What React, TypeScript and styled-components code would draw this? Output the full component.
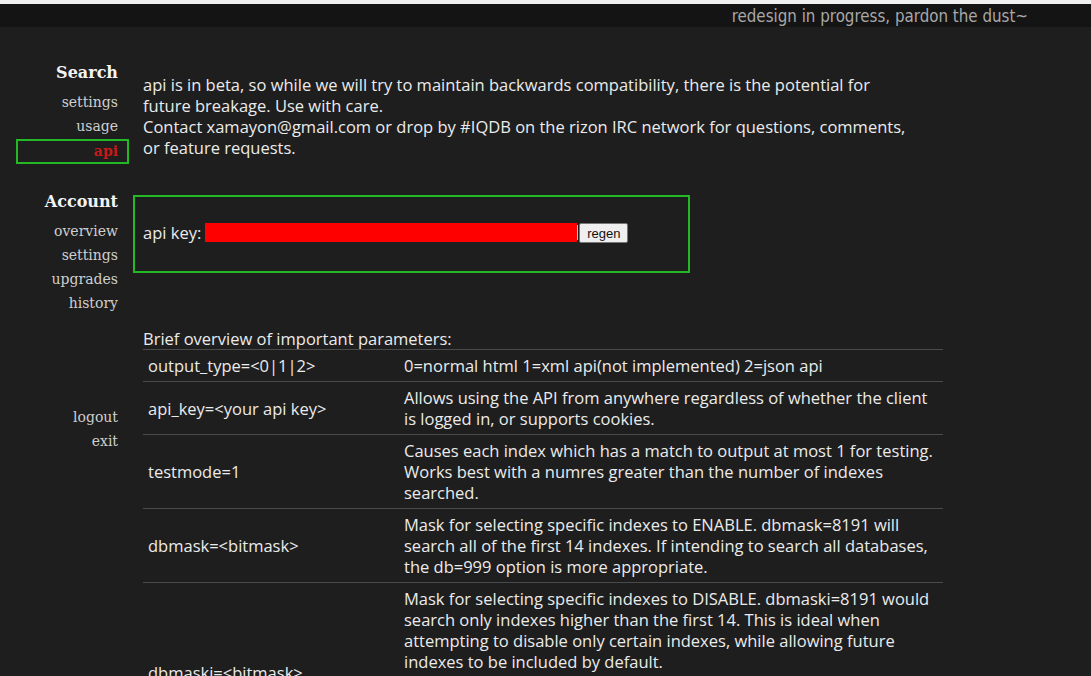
import React from "react";
import styled, { createGlobalStyle } from "styled-components";

const Global = createGlobalStyle`
  html, body { margin: 0; padding: 0; background: #1e1e1e; }
  body { border-top: 4px solid #f0f0f0; font-family: "Open Sans", "Noto Sans", sans-serif; color: #ebebeb; }
`;

const TopBar = styled.div`
  height: 23px;
  background: #141414;
  display: flex;
  justify-content: flex-end;
  align-items: center;
  padding-right: 63px;
  font-family: "DejaVu Sans Condensed", "DejaVu Sans", sans-serif;
  font-stretch: condensed;
  font-size: 16.8px;
  color: #a8a8a8;
`;

const Layout = styled.div`
  display: flex;
  align-items: flex-start;
`;

const Sidebar = styled.nav`
  width: 118px;
  padding: 34px 15px 0 0;
  flex: none;
  text-align: right;
  font-family: "DejaVu Serif", "Liberation Serif", serif;
`;

const Heading = styled.div<{ $top?: number }>`
  font-size: 16px;
  font-weight: bold;
  line-height: 24px;
  color: #f4f4f4;
  margin-top: ${(p) => p.$top ?? 0}px;
  margin-bottom: 5px;
`;

const NavItem = styled.a<{ $active?: boolean; $top?: number }>`
  display: block;
  font-size: 14px;
  line-height: 24px;
  color: #cfcfcf;
  text-decoration: none;
  margin-top: ${(p) => p.$top ?? 0}px;
  ${(p) =>
    p.$active &&
    `
    color: #c41a1a;
    font-weight: bold;
    border: 2px solid #24b824;
    line-height: 21px;
    margin: 1px -11px 0 16px;
    padding-right: 9px;
  `}
`;

const Main = styled.main`
  flex: 1;
  padding-top: 47px;
`;

const Intro = styled.p`
  margin: 0 0 0 10px;
  font-size: 16.5px;
  line-height: 21px;
  white-space: nowrap;
`;

const KeyBox = styled.div`
  margin-top: 37px;
  border: 2px solid #24b824;
  padding: 25px 0 27px 8px;
  box-sizing: content-box;
  display: flex;
  align-items: center;
  font-size: 16.5px;
  line-height: 22px;
  height: 22px;
  width: 545px;
`;

const Redacted = styled.span`
  display: inline-block;
  width: 372px;
  height: 19px;
  background: #ff0000;
  margin-left: 4px;
  margin-top: -2px;
`;

const Slash = styled.span`
  display: inline-block;
  width: 2px;
  height: 15px;
  border-left: 1px solid #cfcfcf;
  box-sizing: border-box;
  margin-top: -2px;
`;

const RegenButton = styled.button`
  font-family: "Liberation Sans", Arial, sans-serif;
  font-size: 13px;
  height: 20px;
  width: 49px;
  padding: 0;
  background: #efefef;
  color: #111;
  border: 1px solid #767676;
  border-radius: 2px;
`;

const Caption = styled.div`
  margin: 55px 0 0 10px;
  font-size: 16.5px;
  line-height: 21px;
`;

const Table = styled.table`
  margin-left: 10px;
  width: 800px;
  border-collapse: collapse;
  font-size: 16.5px;
  line-height: 21px;
`;

const Row = styled.tr`
  border-top: 1px solid #4a4a4a;
`;

const KeyCell = styled.td`
  width: 246px;
  padding: 5px 5px;
  vertical-align: middle;
  white-space: nowrap;
`;

const DescCell = styled.td`
  padding: 5px 5px;
  vertical-align: middle;
  white-space: nowrap;
`;

const params: { key: string; desc: string[] }[] = [
  { key: "output_type=<0|1|2>", desc: ["0=normal html 1=xml api(not implemented) 2=json api"] },
  {
    key: "api_key=<your api key>",
    desc: [
      "Allows using the API from anywhere regardless of whether the client",
      "is logged in, or supports cookies.",
    ],
  },
  {
    key: "testmode=1",
    desc: [
      "Causes each index which has a match to output at most 1 for testing.",
      "Works best with a numres greater than the number of indexes",
      "searched.",
    ],
  },
  {
    key: "dbmask=<bitmask>",
    desc: [
      "Mask for selecting specific indexes to ENABLE. dbmask=8191 will",
      "search all of the first 14 indexes. If intending to search all databases,",
      "the db=999 option is more appropriate.",
    ],
  },
  {
    key: "dbmaski=<bitmask>",
    desc: [
      "Mask for selecting specific indexes to DISABLE. dbmaski=8191 would",
      "search only indexes higher than the first 14. This is ideal when",
      "attempting to disable only certain indexes, while allowing future",
      "indexes to be included by default.",
      "Note that dbmaski overrides dbmask when both are given,",
      "so only one of the two should normally be used.",
      "Combining either with db=999 is not supported and",
      "will return an error.",
    ],
  },
];

export default function App() {
  return (
    <>
      <Global />
      <TopBar>redesign in progress, pardon the dust~</TopBar>
      <Layout>
        <Sidebar>
          <Heading>Search</Heading>
          <NavItem href="#">settings</NavItem>
          <NavItem href="#">usage</NavItem>
          <NavItem href="#" $active>api</NavItem>
          <Heading $top={26}>Account</Heading>
          <NavItem href="#">overview</NavItem>
          <NavItem href="#">settings</NavItem>
          <NavItem href="#">upgrades</NavItem>
          <NavItem href="#">history</NavItem>
          <NavItem href="#" $top={90}>logout</NavItem>
          <NavItem href="#">exit</NavItem>
        </Sidebar>
        <Main>
          <Intro>
            api is in beta, so while we will try to maintain backwards compatibility, there is the potential for
            <br />
            future breakage. Use with care.
            <br />
            Contact xamayon@gmail.com or drop by #IQDB on the rizon IRC network for questions, comments,
            <br />
            or feature requests.
          </Intro>
          <KeyBox>
            api key:
            <Redacted />
            <Slash />
            <RegenButton>regen</RegenButton>
          </KeyBox>
          <Caption>Brief overview of important parameters:</Caption>
          <Table>
            <tbody>
              {params.map((p) => (
                <Row key={p.key}>
                  <KeyCell>{p.key}</KeyCell>
                  <DescCell>
                    {p.desc.map((line, i) => (
                      <React.Fragment key={i}>
                        {i > 0 && <br />}
                        {line}
                      </React.Fragment>
                    ))}
                  </DescCell>
                </Row>
              ))}
            </tbody>
          </Table>
        </Main>
      </Layout>
    </>
  );
}
